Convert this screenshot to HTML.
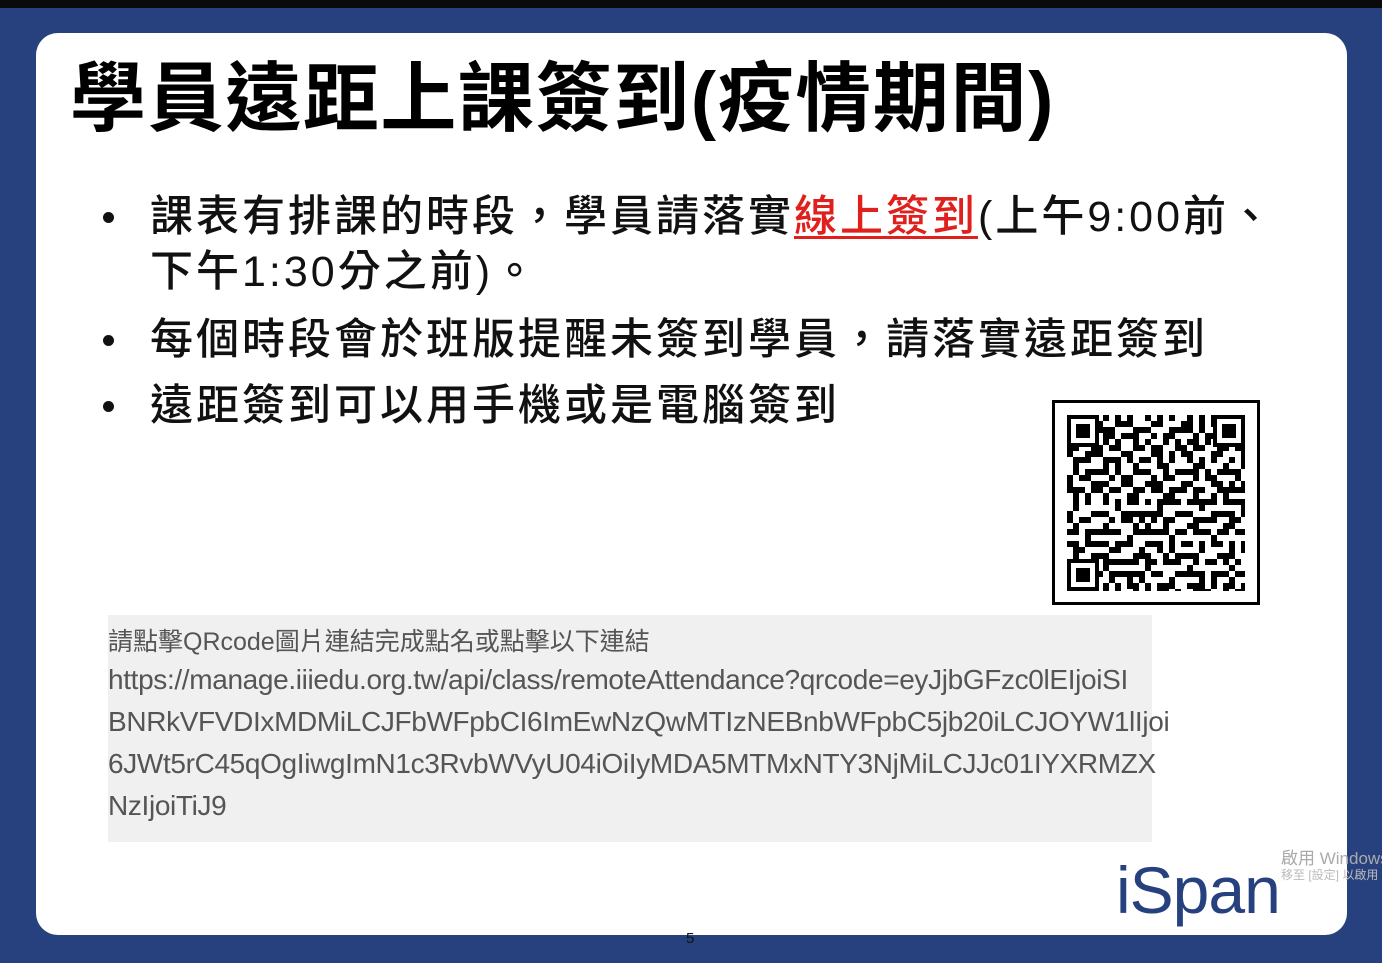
<!DOCTYPE html>
<html><head><meta charset="utf-8"><style>
body{margin:0;width:1382px;height:963px;overflow:hidden;background:#27417f;position:relative;font-family:"Liberation Sans","Noto Sans CJK TC",sans-serif}
.top{position:absolute;left:0;top:0;width:1382px;height:8px;background:#0a0a0a}
.card{position:absolute;left:36px;top:33px;width:1311px;height:902px;background:#fff;border-radius:22px}
.title{position:absolute;left:70px;top:50px;font-size:76px;font-weight:bold;color:#000;white-space:nowrap;letter-spacing:1.6px;line-height:100px}
.b{position:absolute;left:150px;font-size:43px;font-weight:500;color:#111;white-space:nowrap;letter-spacing:3px;line-height:56px}
.dot{position:absolute;left:103px;width:11px;height:11px;border-radius:50%;background:#111}
.red{color:#e0201c;text-decoration:underline;text-decoration-thickness:3px;text-underline-offset:5px}
.gray{position:absolute;left:108px;top:615px;width:1044px;height:227px;background:#f0f0f0}
.gl{position:absolute;left:108px;font-size:28px;color:#555;white-space:nowrap;letter-spacing:-0.35px}
.qr{position:absolute;left:1052px;top:400px;width:202px;height:199px;border:3px solid #000;background:#fff}
.logo{position:absolute;left:1116px;top:852px;font-size:66px;font-weight:normal;color:#27417f;letter-spacing:-1px}
.wm{position:absolute;left:1281px;top:844px;color:#aaa;font-size:17px;white-space:nowrap}
.wm2{position:absolute;left:1281px;top:866px;color:#bbb;font-size:12px;white-space:nowrap}
.pg{position:absolute;left:686px;top:930px;font-size:15px;color:#111}
</style></head><body>
<div class="top"></div>
<div class="card"></div>
<div class="title">學員遠距上課簽到(疫情期間)</div>
<div class="dot" style="top:212px"></div>
<div class="b" style="top:189px">課表有排課的時段，學員請落實<span class="red">線上簽到</span>(上午9:00前、</div>
<div class="b" style="top:244px">下午1:30分之前)。</div>
<div class="dot" style="top:335px"></div>
<div class="b" style="top:312px">每個時段會於班版提醒未簽到學員，請落實遠距簽到</div>
<div class="dot" style="top:401px"></div>
<div class="b" style="top:378px">遠距簽到可以用手機或是電腦簽到</div>
<div class="qr">
<svg width="202" height="199" viewBox="0 0 202 199">
<defs><pattern id="p" width="42" height="42" patternUnits="userSpaceOnUse">
<rect x="0" y="0" width="6" height="6"/><rect x="12" y="0" width="12" height="6"/><rect x="30" y="6" width="6" height="12"/><rect x="6" y="12" width="6" height="6"/><rect x="18" y="12" width="6" height="12"/><rect x="0" y="24" width="12" height="6"/><rect x="36" y="24" width="6" height="6"/><rect x="24" y="30" width="12" height="6"/><rect x="6" y="36" width="6" height="6"/><rect x="36" y="0" width="6" height="6"/><rect x="12" y="30" width="6" height="6"/>
</pattern>
<pattern id="q" width="30" height="30" patternUnits="userSpaceOnUse">
<rect x="0" y="6" width="6" height="6"/><rect x="18" y="0" width="6" height="12"/><rect x="6" y="18" width="12" height="6"/><rect x="24" y="24" width="6" height="6"/>
</pattern></defs>
<rect x="12" y="12" width="178" height="176" fill="url(#p)"/>
<rect x="12" y="12" width="178" height="176" fill="url(#q)"/>
<g>
<rect x="12" y="12" width="32" height="32" fill="#fff"/><rect x="14" y="14" width="28" height="28" fill="none" stroke="#000" stroke-width="4"/><rect x="21" y="21" width="14" height="14"/>
<rect x="158" y="12" width="32" height="32" fill="#fff"/><rect x="160" y="14" width="28" height="28" fill="none" stroke="#000" stroke-width="4"/><rect x="167" y="21" width="14" height="14"/>
<rect x="12" y="156" width="32" height="32" fill="#fff"/><rect x="14" y="158" width="28" height="28" fill="none" stroke="#000" stroke-width="4"/><rect x="21" y="165" width="14" height="14"/>
</g>
</svg></div>
<div class="gray"></div>
<div class="gl" style="top:622px;font-size:25px;letter-spacing:0">請點擊QRcode圖片連結完成點名或點擊以下連結</div>
<div class="gl" style="top:664px">https://manage.iiiedu.org.tw/api/class/remoteAttendance?qrcode=eyJjbGFzc0lEIjoiSI</div>
<div class="gl" style="top:706px">BNRkVFVDIxMDMiLCJFbWFpbCI6ImEwNzQwMTIzNEBnbWFpbC5jb20iLCJOYW1lIjoi</div>
<div class="gl" style="top:748px">6JWt5rC45qOgIiwgImN1c3RvbWVyU04iOiIyMDA5MTMxNTY3NjMiLCJJc01IYXRMZX</div>
<div class="gl" style="top:790px">NzIjoiTiJ9</div>
<div class="logo">iSpan</div>
<div class="wm">啟用 Windows</div>
<div class="wm2">移至 [設定] 以啟用</div>
<div class="pg">5</div>
</body></html>
